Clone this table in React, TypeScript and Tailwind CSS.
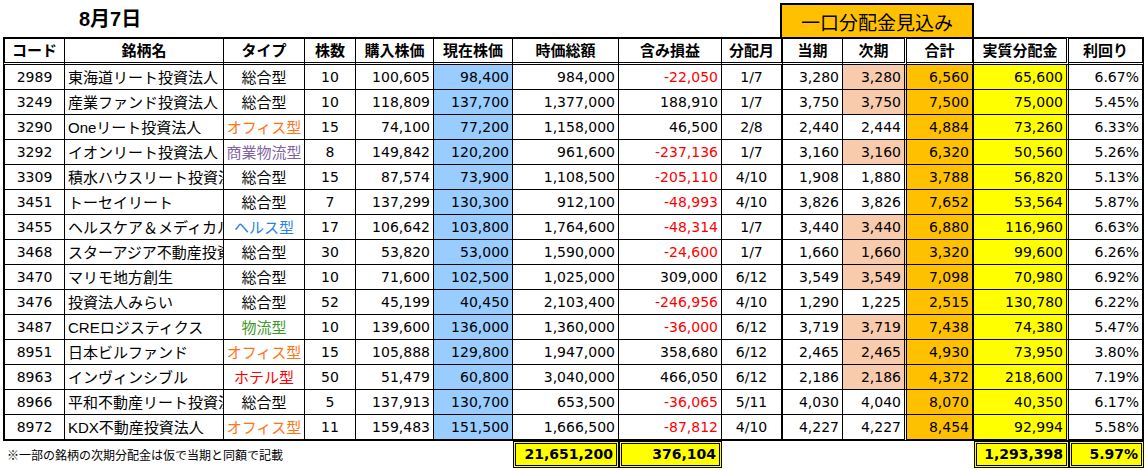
import React from 'react';

type Row = [string, string, string, string, string, string, string, string, string, string, string, string, string, string, boolean];

const rows: Row[] = [
  ['2989', '東海道リート投資法人', '総合型', '10', '100,605', '98,400', '984,000', '-22,050', '1/7', '3,280', '3,280', '6,560', '65,600', '6.67%', true],
  ['3249', '産業ファンド投資法人', '総合型', '10', '118,809', '137,700', '1,377,000', '188,910', '1/7', '3,750', '3,750', '7,500', '75,000', '5.45%', true],
  ['3290', 'Oneリート投資法人', 'オフィス型', '15', '74,100', '77,200', '1,158,000', '46,500', '2/8', '2,440', '2,444', '4,884', '73,260', '6.33%', false],
  ['3292', 'イオンリート投資法人', '商業物流型', '8', '149,842', '120,200', '961,600', '-237,136', '1/7', '3,160', '3,160', '6,320', '50,560', '5.26%', true],
  ['3309', '積水ハウスリート投資法人', '総合型', '15', '87,574', '73,900', '1,108,500', '-205,110', '4/10', '1,908', '1,880', '3,788', '56,820', '5.13%', false],
  ['3451', 'トーセイリート', '総合型', '7', '137,299', '130,300', '912,100', '-48,993', '4/10', '3,826', '3,826', '7,652', '53,564', '5.87%', false],
  ['3455', 'ヘルスケア＆メディカル投資法人', 'ヘルス型', '17', '106,642', '103,800', '1,764,600', '-48,314', '1/7', '3,440', '3,440', '6,880', '116,960', '6.63%', true],
  ['3468', 'スターアジア不動産投資法人', '総合型', '30', '53,820', '53,000', '1,590,000', '-24,600', '1/7', '1,660', '1,660', '3,320', '99,600', '6.26%', true],
  ['3470', 'マリモ地方創生', '総合型', '10', '71,600', '102,500', '1,025,000', '309,000', '6/12', '3,549', '3,549', '7,098', '70,980', '6.92%', true],
  ['3476', '投資法人みらい', '総合型', '52', '45,199', '40,450', '2,103,400', '-246,956', '4/10', '1,290', '1,225', '2,515', '130,780', '6.22%', false],
  ['3487', 'CREロジスティクス', '物流型', '10', '139,600', '136,000', '1,360,000', '-36,000', '6/12', '3,719', '3,719', '7,438', '74,380', '5.47%', true],
  ['8951', '日本ビルファンド', 'オフィス型', '15', '105,888', '129,800', '1,947,000', '358,680', '6/12', '2,465', '2,465', '4,930', '73,950', '3.80%', true],
  ['8963', 'インヴィンシブル', 'ホテル型', '50', '51,479', '60,800', '3,040,000', '466,050', '6/12', '2,186', '2,186', '4,372', '218,600', '7.19%', true],
  ['8966', '平和不動産リート投資法人', '総合型', '5', '137,913', '130,700', '653,500', '-36,065', '5/11', '4,030', '4,040', '8,070', '40,350', '6.17%', false],
  ['8972', 'KDX不動産投資法人', 'オフィス型', '11', '159,483', '151,500', '1,666,500', '-87,812', '4/10', '4,227', '4,227', '8,454', '92,994', '5.58%', false],
];

const headers = ['コード', '銘柄名', 'タイプ', '株数', '購入株価', '現在株価', '時価総額', '含み損益', '分配月', '当期', '次期', '合計', '実質分配金', '利回り'];

const RB = [
  'border-r',
  'border-r',
  'border-r',
  'border-r',
  'border-r',
  'border-r',
  'border-r',
  'border-r',
  'border-r-2',
  'border-r',
  'border-r-[3px] [border-right-style:double]',
  'border-r-2',
  'border-r-[3px] [border-right-style:double]',
  'border-r-2',
];

const ALIGN = [
  'justify-center',
  'justify-start pl-[3px]',
  'justify-center',
  'justify-center',
  'justify-end pr-[3px]',
  'justify-end pr-[3px]',
  'justify-end pr-[3px]',
  'justify-end pr-[3px]',
  'justify-center',
  'justify-end pr-[3px]',
  'justify-end pr-[3px]',
  'justify-end pr-[3px]',
  'justify-end pr-[3px]',
  'justify-end pr-[3px]',
];

const NUM = "font-['DejaVu_Sans',sans-serif] text-[14px]";
const JP = "font-['Liberation_Sans','Noto_Sans_CJK_JP',sans-serif] text-[15px]";

const typeColor: Record<string, string> = {
  '総合型': 'text-black',
  'オフィス型': 'text-[#ff7415]',
  '商業物流型': 'text-[#8064a2]',
  'ヘルス型': 'text-[#2a82e4]',
  '物流型': 'text-[#3a9a28]',
  'ホテル型': 'text-[#ff0000]',
};

function cellClasses(i: number, row: Row): string {
  let bg = '';
  let color = 'text-black';
  let font = NUM;
  if (i === 1 || i === 2) font = JP;
  if (i === 2) color = typeColor[row[2]] ?? 'text-black';
  if (i === 5) bg = 'bg-[#99ccff]';
  if (i === 7 && row[7].startsWith('-')) color = 'text-[#ff0000]';
  if (i === 10 && row[14]) bg = 'bg-[#f8cbad]';
  if (i === 11) bg = 'bg-[#ffc000]';
  if (i === 12) bg = 'bg-[#ffff00]';
  return `${font} ${color} ${bg}`;
}

export default function App() {
  return (
    <div className="w-[1147px] h-[470px] bg-white text-black overflow-hidden">
      <div className="ml-[3px] grid grid-cols-[62px_159px_81px_51px_78px_79px_106px_103px_61px_60px_64px_67px_95px_75px]">
        {/* Title row */}
        <div className="col-span-9 h-[37px] flex items-center pl-[76px] font-['Liberation_Sans','Noto_Sans_CJK_JP',sans-serif] text-[20px] font-bold leading-none">
          8月7日
        </div>
        <div className="col-span-3 -ml-[3px] mt-[3px] h-[34px] border-2 border-b-0 border-black bg-[#ffc000] flex items-center justify-center font-['Noto_Sans_CJK_JP',sans-serif] text-[19px] leading-none">
          一口分配金見込み
        </div>
        <div className="col-span-2" />

        {/* Header row */}
        {headers.map((h, i) => (
          <div
            key={h}
            className={`h-[28px] border-t-2 border-b-[3px] [border-bottom-style:double] border-black ${RB[i]} ${i === 0 ? 'border-l-2' : ''} flex items-center justify-center bg-white font-bold ${JP} leading-none`}
          >
            {h}
          </div>
        ))}

        {/* Data rows */}
        {rows.map((row, r) =>
          row.slice(0, 14).map((v, i) => {
            const last = r === rows.length - 1;
            return (
              <div
                key={`${r}-${i}`}
                className={`${last ? 'h-[26px] border-b-2' : 'h-[25px] border-b'} border-black ${RB[i]} ${i === 0 ? 'border-l-2' : ''} flex items-center overflow-hidden whitespace-nowrap leading-none ${ALIGN[i]} ${cellClasses(i, row)}`}
              >
                <span className="shrink-0">{v as string}</span>
              </div>
            );
          })
        )}

        {/* Footer row */}
        <div className="col-span-6 h-[27px] flex items-center pl-[4px] font-['Noto_Sans_CJK_JP',sans-serif] text-[12px] leading-none whitespace-nowrap">
          ※一部の銘柄の次期分配金は仮で当期と同額で記載
        </div>
        <div className={`h-[27px] border-[3px] border-double border-black bg-[#ffff00] flex items-center justify-end pr-[3px] font-bold ${NUM}`}>
          21,651,200
        </div>
        <div className={`h-[27px] border-[3px] border-double border-black bg-[#ffff00] flex items-center justify-end pr-[3px] font-bold ${NUM}`}>
          376,104
        </div>
        <div className="col-span-4" />
        <div className={`h-[27px] border-[3px] border-double border-black bg-[#ffff00] flex items-center justify-end pr-[3px] font-bold ${NUM}`}>
          1,293,398
        </div>
        <div className={`h-[27px] border-[3px] border-double border-black bg-[#ffff00] flex items-center justify-end pr-[3px] font-bold ${NUM}`}>
          5.97%
        </div>
      </div>
    </div>
  );
}
